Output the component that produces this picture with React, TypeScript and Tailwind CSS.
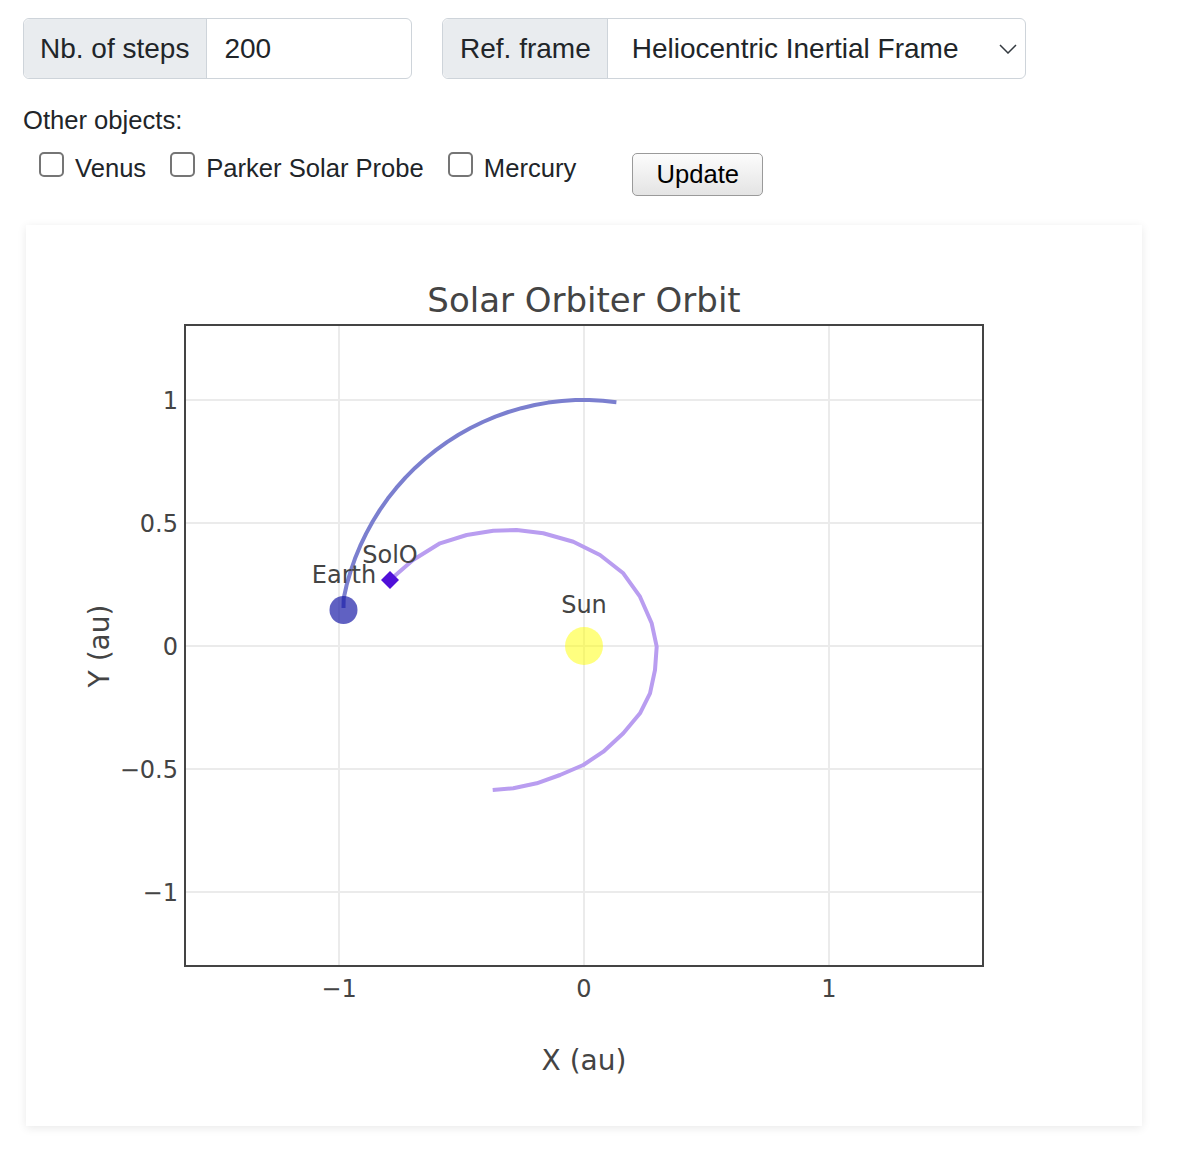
import React from 'react'

// trail of the earth: arc of radius 1 au around the sun
const toPx = (x: number, y: number) => [584 + 245 * x, 646 - 246 * y]

const earthTrail = () => {
  const pts: string[] = []
  for (let a = 82.4; a <= 171.6; a += 3.2) {
    const r = (a * Math.PI) / 180
    const [px, py] = toPx(Math.cos(r), Math.sin(r))
    pts.push(`${px.toFixed(1)},${py.toFixed(1)}`)
  }
  pts.push('343.5,608')
  return pts.join(' ')
}

const soloTrail = [
  [390, 580],
  [413, 560],
  [440, 543.3],
  [466.7, 535],
  [493.3, 530.7],
  [516.7, 530],
  [543.3, 533.3],
  [573.3, 541.7],
  [600, 555],
  [623.3, 573.3],
  [640, 596.7],
  [651.7, 623.3],
  [656.7, 646.7],
  [655, 670],
  [650, 693.3],
  [640, 713.3],
  [623.3, 733.3],
  [603.3, 751.7],
  [583.3, 765],
  [560, 775],
  [536.7, 783.3],
  [513.3, 788.3],
  [492.7, 790],
]
  .map((p) => p.join(','))
  .reverse()
  .join(' ')

const yTicks = [
  { v: '1', y: 400 },
  { v: '0.5', y: 523 },
  { v: '0', y: 646 },
  { v: '\u22120.5', y: 769 },
  { v: '\u22121', y: 892 },
]

const xTicks = [
  { v: '\u22121', x: 339 },
  { v: '0', x: 584 },
  { v: '1', x: 829 },
]

const OrbitPlot = () => {
  return (
    <svg
      width={1116}
      height={901}
      viewBox="26 225 1116 901"
      className="block"
      fontFamily="'DejaVu Sans', Verdana, sans-serif"
    >
      {/* grid */}
      {xTicks.map((t) => (
        <line key={t.x} x1={t.x} x2={t.x} y1={325} y2={967} stroke="#ebebeb" strokeWidth={2} />
      ))}
      {yTicks.map((t) => (
        <line key={t.y} x1={185} x2={983} y1={t.y} y2={t.y} stroke="#ebebeb" strokeWidth={2} />
      ))}

      {/* traces */}
      <polyline points={earthTrail()} fill="none" stroke="#7b7fcf" strokeWidth={4} strokeLinejoin="round" />
      <polyline points={soloTrail} fill="none" stroke="#b99df0" strokeWidth={4} strokeLinejoin="round" />
      <circle cx={584} cy={646} r={19} fill="#ffff00" fillOpacity={0.5} />
      <circle cx={343.5} cy={610} r={14} fill="#1416a5" fillOpacity={0.68} />
      <polygon points="390,571 399,580 390,589 381,580" fill="#5010d8" />

      {/* labels */}
      <g fill="#444" fontSize={24} textAnchor="middle">
        <text x={344} y={583}>Earth</text>
        <text x={390} y={563}>SolO</text>
        <text x={584} y={613}>Sun</text>
      </g>

      {/* frame */}
      <rect x={185} y={325} width={798} height={641} fill="none" stroke="#444" strokeWidth={2} />

      {/* ticks */}
      <g fill="#444" fontSize={24}>
        {yTicks.map((t) => (
          <text key={t.y} x={178} y={t.y + 8.5} textAnchor="end">
            {t.v}
          </text>
        ))}
        {xTicks.map((t) => (
          <text key={t.x} x={t.x} y={997} textAnchor="middle">
            {t.v}
          </text>
        ))}
      </g>

      <text x={584} y={312} fill="#444" fontSize={34} textAnchor="middle">
        Solar Orbiter Orbit
      </text>
      <text x={584} y={1070} fill="#444" fontSize={28} textAnchor="middle">
        X (au)
      </text>
      <text transform="translate(109 646) rotate(-90)" fill="#444" fontSize={28} textAnchor="middle">
        Y (au)
      </text>
    </svg>
  )
}

const Check = ({ label, last }: { label: string; last?: boolean }) => {
  return (
    <label className={`flex items-start ${last ? '' : 'mr-[24px]'}`}>
      <span className="mt-[3px] h-[25px] w-[25px] rounded-[5px] border-2 border-[#757575] bg-white" />
      <span className="ml-[11px] leading-[38px]">{label}</span>
    </label>
  )
}

const App = () => {
  return (
    <div className="min-h-screen bg-white font-['Liberation_Sans',Arial,sans-serif] text-[25.6px] text-[#212529]">
      <div className="pl-[23px] pt-[18px]">
        <div className="flex gap-[30px] text-[28px]">
          <div className="flex h-[61px] w-[389px] rounded-[6px] border border-[#ced4da]">
            <div className="flex items-center rounded-l-[6px] border-r border-[#ced4da] bg-[#e9ecef] pl-[16px] pr-[17px]">
              Nb. of steps
            </div>
            <div className="flex flex-1 items-center pl-[17px]">200</div>
          </div>
          <div className="flex h-[61px] w-[584px] rounded-[6px] border border-[#ced4da]">
            <div className="flex items-center rounded-l-[6px] border-r border-[#ced4da] bg-[#e9ecef] pl-[17px] pr-[16px]">
              Ref. frame
            </div>
            <div className="flex flex-1 items-center justify-between pl-[24px] pr-[8px]">
              <span>Heliocentric Inertial Frame</span>
              <svg width="18" height="10" viewBox="0 0 18 10">
                <polyline points="1,1 9,9 17,1" fill="none" stroke="#343a40" strokeWidth="1.5" />
              </svg>
            </div>
          </div>
        </div>

        <div className="mt-[22px] h-[38px] leading-[38px]">Other objects:</div>

        <div className="mt-[10px] flex h-[47px] items-start pl-[16px]">
          <Check label="Venus" />
          <Check label="Parker Solar Probe" />
          <Check label="Mercury" last />
          <button className="ml-[56px] mt-[4px] h-[43px] w-[131px] rounded-[5px] border border-[#9a9a9a] bg-gradient-to-b from-[#fcfcfc] to-[#e4e4e4] text-[25.6px] text-black">
            Update
          </button>
        </div>
      </div>

      <div className="ml-[26px] mt-[29px] w-[1116px] bg-white shadow-[0_2px_9px_rgba(0,0,0,0.09)]">
        <OrbitPlot />
      </div>
    </div>
  )
}

export default App
